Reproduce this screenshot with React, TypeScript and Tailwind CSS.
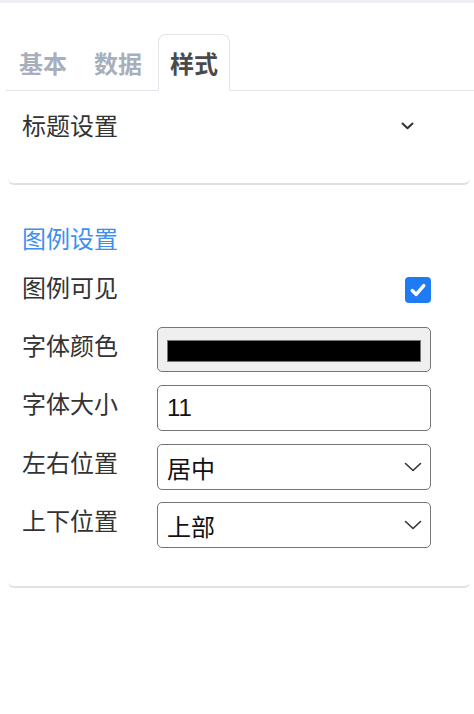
import React from "react";

const Chevron = ({ className = "" }: { className?: string }) => (
  <svg className={className} width="18" height="10" viewBox="0 0 18 10" fill="none">
    <path d="M1.5 1.5 L9 8.5 L16.5 1.5" stroke="#333" strokeWidth="1.6" strokeLinecap="round" strokeLinejoin="round" />
  </svg>
);

const SmallChevron = ({ className = "" }: { className?: string }) => (
  <svg className={className} width="13" height="8" viewBox="0 0 13 8" fill="none">
    <path d="M1.5 1.5 L6.5 6.3 L11.5 1.5" stroke="#333" strokeWidth="2" strokeLinecap="round" strokeLinejoin="round" />
  </svg>
);

const Row = ({ label, mt, children }: { label: string; mt: string; children: React.ReactNode }) => (
  <div className={`flex items-start h-[46px] ${mt}`}>
    <div className="w-[135px] leading-[36px] text-[24px] text-[#333]">{label}</div>
    <div className="w-[274px] h-full">{children}</div>
  </div>
);

export default function App() {
  return (
    <div
      className="w-[474px] h-[714px] bg-white"
      style={{ fontFamily: '"Noto Sans CJK SC", "Noto Sans", sans-serif' }}
    >
      <div className="h-[3px] bg-[#eceef2]" />
      <div className="pt-[31px]">
        <div className="ml-[6px] flex gap-[3px] border-b border-[#e1e5ea] pl-[1px]">
          <div className="px-[11px] pt-[10px] pb-[9px] border border-transparent text-[24px] leading-[36px] font-bold text-[#a7afbd] mb-[-1px]">
            基本
          </div>
          <div className="px-[11px] pt-[10px] pb-[9px] border border-transparent text-[24px] leading-[36px] font-bold text-[#a7afbd] mb-[-1px]">
            数据
          </div>
          <div className="ml-[1px] px-[11px] pt-[10px] pb-[9px] border border-[#e1e5ea] border-b-white rounded-t-[8px] bg-white text-[24px] leading-[36px] font-bold text-[#4a4a4a] mb-[-1px]">
            样式
          </div>
        </div>
      </div>

      <div className="ml-[8px] mr-[4px] border-b-[2px] border-[#dde1e8] rounded-b-[6px] pt-[16px] pb-[40px] pl-[14px] pr-[56px]">
        <div className="flex items-center justify-between">
          <div className="text-[24px] leading-[36px] text-[#333]">标题设置</div>
          <SmallChevron className="mt-[2px]" />
        </div>
      </div>

      <div className="ml-[8px] mr-[4px] border-b-[2px] border-[#dde1e8] rounded-b-[6px] pt-[35px] pb-[38px] pl-[14px]">
        <div className="text-[24px] leading-[36px] text-[#3d8ff0]">图例设置</div>
        <div className="flex items-start h-[46px] mt-[13px]">
          <div className="w-[135px] leading-[36px] text-[24px] text-[#333]">图例可见</div>
          <div className="w-[274px] flex justify-end pt-[8px]">
            <div className="w-[26px] h-[26px] rounded-[4px] bg-[#1f7bf4] flex items-center justify-center">
              <svg width="20" height="20" viewBox="0 0 20 20" fill="none">
                <path d="M4.2 10.6 L8.2 14.4 L15.8 5.6" stroke="white" strokeWidth="3.4" strokeLinecap="round" strokeLinejoin="round" />
              </svg>
            </div>
          </div>
        </div>
        <Row label="字体颜色" mt="mt-[12px]">
          <div className="h-[45px] rounded-[5px] border border-[#767676] bg-[#efefef] px-[9px] pt-[12px]">
            <div className="h-[22px] bg-black border border-[#777]" />
          </div>
        </Row>
        <Row label="字体大小" mt="mt-[12px]">
          <div
            className="h-full rounded-[5px] border border-[#767676] bg-white flex items-center pl-[9px] text-[24px] text-[#111]"
            style={{ fontFamily: '"Liberation Sans", Arial, sans-serif' }}
          >
            11
          </div>
        </Row>
        <Row label="左右位置" mt="mt-[13px]">
          <div className="h-full rounded-[5px] border border-[#767676] bg-white flex items-center justify-between pl-[9px] pr-[8px] text-[24px] text-[#111]">
            <span className="leading-[36px] mt-[2px]">居中</span>
            <Chevron />
          </div>
        </Row>
        <Row label="上下位置" mt="mt-[12px]">
          <div className="h-full rounded-[5px] border border-[#767676] bg-white flex items-center justify-between pl-[9px] pr-[8px] text-[24px] text-[#111]">
            <span className="leading-[36px] mt-[2px]">上部</span>
            <Chevron />
          </div>
        </Row>
      </div>
    </div>
  );
}
